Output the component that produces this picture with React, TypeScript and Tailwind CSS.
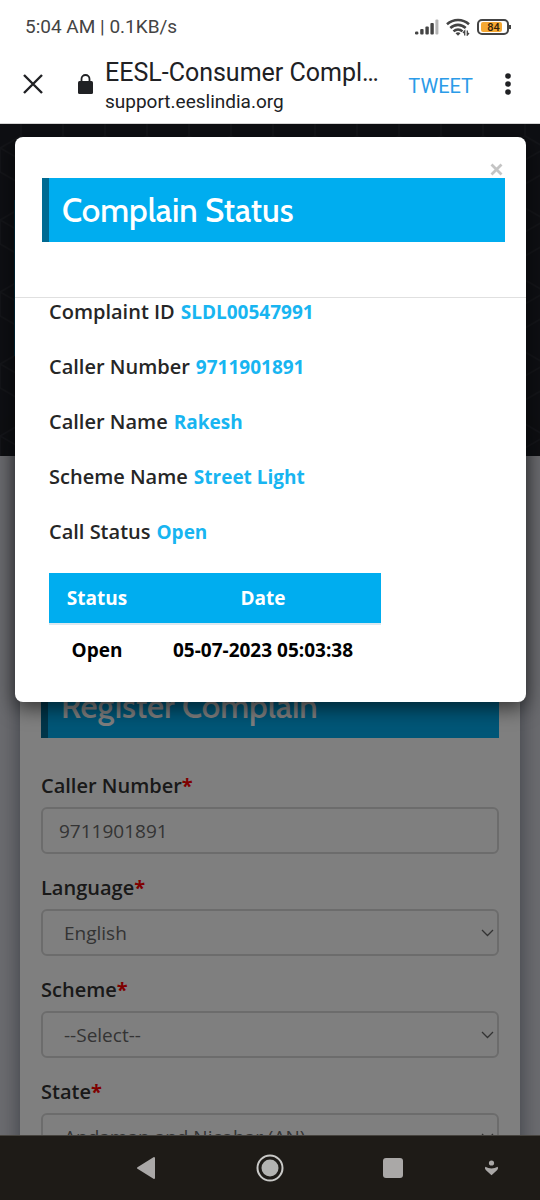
import type { ReactNode } from "react";

const details = [
  { label: "Complaint ID", value: "SLDL00547991" },
  { label: "Caller Number", value: "9711901891" },
  { label: "Caller Name", value: "Rakesh" },
  { label: "Scheme Name", value: "Street Light" },
  { label: "Call Status", value: "Open" },
];

function StatusBar() {
  return (
    <div className="flex h-[54px] items-center justify-between pr-[29px] pl-[25px] text-[#444]">
      <span className="text-[19px] leading-6">5:04 AM | 0.1KB/s</span>
      <div className="flex items-center gap-1.5">
        <svg width="26" height="18" viewBox="0 0 26 18" fill="#444" aria-hidden="true">
          <rect x="1" y="13.500" width="3.400" height="3" rx="1.300" />
          <rect x="6.200" y="11" width="3.400" height="5.500" rx="1" />
          <rect x="11.400" y="8.500" width="3.400" height="8" rx="1" />
          <rect x="16.400" y="5" width="3.400" height="11.500" rx="1" />
          <rect x="21.400" y="1.500" width="3" height="15" rx="1" fill="#b5b5b5" />
        </svg>
        <svg width="24" height="18" viewBox="0 0 24 18" fill="none" stroke="#444" strokeWidth="2.600" aria-hidden="true">
          <path d="M1 6.200C7.300.600 16.700.600 23 6.200" />
          <path d="M4.300 10c4.500-4.200 10.900-4.200 15.400 0" />
          <path d="M7.500 13.400c2.700-2.500 6.300-2.500 9 0" />
          <path d="M12 17.800l-2.500-2.600q2.500-1.800 5 0z" fill="#444" stroke="none" />
          <path d="M18.700 17.500v-4.500l-1.700 2M21.300 12.500v4.500l1.700-2" strokeWidth="1.300" />
        </svg>
        <div className="ml-px flex items-center">
          <div className="flex h-4 w-8 items-center rounded-[5px] border-2 border-[#444] p-0.5">
            <span className="flex h-[10px] w-[21px] items-center justify-center rounded-xs bg-[#f5a833] pl-1 text-[11px] leading-none font-medium text-[#33230a]">
              84
            </span>
          </div>
          <span className="h-1 w-0.5 bg-[#444]" />
        </div>
      </div>
    </div>
  );
}

function BrowserBar() {
  return (
    <header className="flex h-[70px] items-center border-b border-[#d5d5d5] pr-[22px] pb-[10px] pl-[23px] text-[#202124]">
      <button type="button" aria-label="Close tab" className="flex shrink-0">
        <svg width="20" height="20" viewBox="0 0 20 20" stroke="#202124" strokeWidth="2.400" aria-hidden="true">
          <path d="M1 1l18 18M19 1L1 19" />
        </svg>
      </button>
      <svg className="ml-[35px] shrink-0" width="15" height="20" viewBox="0 0 15 20" aria-hidden="true">
        <rect y="7" width="15" height="13" rx="1.500" fill="#202124" />
        <path d="M3.500 8V5a4 4 0 0 1 8 0v3" fill="none" stroke="#202124" strokeWidth="1.800" />
      </svg>
      <div className="ml-3 flex min-w-0 flex-1 flex-col gap-px pt-1">
        <span className="text-[25px] leading-8 whitespace-nowrap">EESL-Consumer Compl…</span>
        <span className="text-[19px] leading-6 whitespace-nowrap">support.eeslindia.org</span>
      </div>
      <button type="button" className="ml-6 shrink-0 pt-1 text-[20px] leading-6 text-[#2b9be8]">
        TWEET
      </button>
      <button type="button" aria-label="More options" className="ml-[25px] flex w-5 shrink-0 justify-center">
        <svg width="6" height="22" viewBox="0 0 6 22" fill="#202124" aria-hidden="true">
          <circle cx="3" cy="3" r="2.800" />
          <circle cx="3" cy="11" r="2.800" />
          <circle cx="3" cy="19" r="2.800" />
        </svg>
      </button>
    </header>
  );
}

function Hero() {
  return (
    <div className="h-[332px] bg-[#1d1f26] px-[14px] pt-[76px]">
      <svg className="absolute inset-0 h-[332px] w-full" aria-hidden="true">
        <defs>
          <pattern id="cubes" width="42" height="72" patternUnits="userSpaceOnUse">
            <path
              d="M21 0v12L0 24v24l21 12v12M21 12l21 12v24L21 60M0 24l21 12 21-12M21 36v24"
              fill="none"
              stroke="#292b33"
              strokeWidth="1.500"
            />
          </pattern>
        </defs>
        <rect width="100%" height="100%" fill="url(#cubes)" />
      </svg>
      <div className="relative h-[156px] bg-[#00557a]" />
    </div>
  );
}

function Banner({ children }: { children: ReactNode }) {
  return (
    <h2 className="flex h-16 items-center border-l-[7px] border-[#006a92] bg-[#00adef] pl-[13px] font-['Cabin','Lato',sans-serif] text-[33px] leading-10 font-medium text-white">
      {children}
    </h2>
  );
}

function FieldLabel({ id, children }: { id: string; children: ReactNode }) {
  return (
    <label htmlFor={id} className="text-[20px] leading-7 font-semibold text-[#333]">
      {children}
      <span className="font-bold text-[#ff0000]">*</span>
    </label>
  );
}

const fieldStyle =
  "h-[47px] w-full rounded-md border-2 border-[#d8d8d8] bg-white text-[19px] leading-7 text-[#686868]";

function SelectField({ id, label, value }: { id: string; label: string; value: string }) {
  return (
    <div className="flex flex-col gap-[7px]">
      <FieldLabel id={id}>{label}</FieldLabel>
      <div className="relative">
        <select id={id} className={`${fieldStyle} appearance-none pr-8 pl-[21px]`}>
          <option>{value}</option>
        </select>
        <svg
          className="pointer-events-none absolute top-5 right-[5px]"
          width="13"
          height="8"
          viewBox="0 0 13 8"
          fill="none"
          stroke="#666"
          strokeWidth="1.300"
          aria-hidden="true"
        >
          <path d="M1 1l5.500 5.500L12 1" />
        </svg>
      </div>
    </div>
  );
}

function RegisterForm() {
  return (
    <form className="mx-5 -mt-4 h-[900px] bg-white px-[21px] pt-[234px] shadow-[0_0_22px_rgba(20,30,50,0.5)]">
      <Banner>Register Complain</Banner>
      <div className="mt-[34px] flex flex-col gap-5">
        <div className="flex flex-col gap-[7px]">
          <FieldLabel id="caller">Caller Number</FieldLabel>
          <input id="caller" defaultValue="9711901891" className={`${fieldStyle} px-4`} />
        </div>
        <SelectField id="language" label="Language" value="English" />
        <SelectField id="scheme" label="Scheme" value="--Select--" />
        <SelectField id="state" label="State" value="Andaman and Nicobar (AN)" />
      </div>
    </form>
  );
}

function StatusDialog() {
  return (
    <div
      role="dialog"
      aria-label="Complain Status"
      className="absolute top-[13px] right-[14px] left-[15px] rounded-lg bg-white pb-[27px] shadow-[0_6px_20px_rgba(0,0,0,0.6)]"
    >
      <div className="flex flex-col border-b border-[#e0e0e0] pt-6 pr-[21px] pb-[55px] pl-[27px]">
        <button type="button" aria-label="Close" className="flex h-[17px] items-center self-end pr-0.5">
          <svg width="13" height="13" viewBox="0 0 13 13" stroke="#c4c4c4" strokeWidth="2.800" aria-hidden="true">
            <path d="M1.500 1.500l10 10M11.500 1.500l-10 10" />
          </svg>
        </button>
        <Banner>Complain Status</Banner>
      </div>
      <div className="px-[34px]">
        <dl className="flex flex-col gap-[27px] leading-7">
          {details.map((item) => (
            <div key={item.label} className="flex gap-1.5">
              <dt className="text-[20px] leading-7 font-semibold text-[#262626]">{item.label}</dt>
              <dd className="text-[19px] leading-7 font-bold text-[#18b5f1]">{item.value}</dd>
            </div>
          ))}
        </dl>
        <table className="mt-[27px] text-center text-[19px] leading-7 font-bold">
          <thead>
            <tr className="h-[51px] border-b-2 border-[#dce8ef] bg-[#00adef] text-white">
              <th className="w-[96px]">Status</th>
              <th className="w-[236px]">Date</th>
            </tr>
          </thead>
          <tbody>
            <tr className="h-[51px] text-black">
              <td>Open</td>
              <td>05-07-2023 05:03:38</td>
            </tr>
          </tbody>
        </table>
      </div>
    </div>
  );
}

function NavigationBar() {
  return (
    <nav className="relative grid h-[65px] shrink-0 grid-cols-[208px_124px_122px_1fr] items-center border-t border-[#45423d] bg-[#1e1b17]">
      <button type="button" aria-label="Back" className="flex justify-end pr-[52px]">
        <svg width="20" height="24" viewBox="0 0 20 24" aria-hidden="true">
          <path d="M18 2v20L2 12z" fill="#aaa8a7" stroke="#aaa8a7" strokeWidth="2" strokeLinejoin="round" />
        </svg>
      </button>
      <button type="button" aria-label="Home" className="flex justify-center">
        <svg width="28" height="28" viewBox="0 0 28 28" aria-hidden="true">
          <circle cx="14" cy="14" r="12.500" fill="none" stroke="#c9c9c7" strokeWidth="2" />
          <circle cx="14" cy="14" r="8.500" fill="#b3b3b1" />
        </svg>
      </button>
      <button type="button" aria-label="Recent apps" className="flex justify-center">
        <span className="size-5 rounded-[3px] bg-[#aaa8a7]" />
      </button>
      <button type="button" aria-label="One-handed mode" className="flex pl-[30px]">
        <svg width="15" height="16" viewBox="0 0 15 16" fill="#aaa8a7" aria-hidden="true">
          <circle cx="7.500" cy="3" r="2.600" />
          <path d="M1.200 6.800q6.300 3.600 12.600 0 .8 2-.8 3.500L7.500 15.300 2 10.300Q.4 8.800 1.200 6.800z" />
        </svg>
      </button>
    </nav>
  );
}

export default function App() {
  return (
    <div className="flex h-screen flex-col bg-white font-['Roboto',sans-serif]">
      <StatusBar />
      <BrowserBar />
      <main className="relative min-h-0 flex-1 overflow-hidden bg-[#d8d9e0] font-['Open_Sans',sans-serif]">
        <Hero />
        <RegisterForm />
        <div className="absolute inset-0 bg-black/50" />
        <StatusDialog />
      </main>
      <NavigationBar />
    </div>
  );
}
